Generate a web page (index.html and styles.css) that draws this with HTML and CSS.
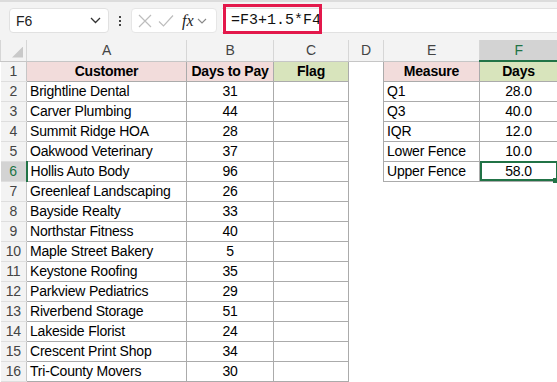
FILE: index.html
```html
<html lang="en">
  <head>
    <meta charset="utf-8"/>
    <title>Days to Pay</title>
    <link rel="stylesheet" href="styles.css">
  </head>
  <body>
    <div id="toolbar">
      <div class="namebox">
        <span class="cellref">F6</span>
        <svg class="chev" width="11" height="7" viewBox="0 0 11 7"><path d="M1 1 L5.5 5.5 L10 1" fill="none" stroke="#333" stroke-width="1.3"/></svg>
      </div>
      <div class="dots"><i></i><i></i><i></i></div>
      <div class="fxbox">
        <svg width="14" height="14" viewBox="0 0 14 14"><path d="M1 1 L13 13 M13 1 L1 13" stroke="#bdbdbd" stroke-width="1.2"/></svg>
        <svg width="16" height="14" viewBox="0 0 16 14"><path d="M1 7.5 L5.5 12 L15 1.5" fill="none" stroke="#bdbdbd" stroke-width="1.2"/></svg>
        <span class="fx">fx</span>
        <svg width="10" height="6" viewBox="0 0 10 6"><path d="M1 1 L5 5 L9 1" fill="none" stroke="#888" stroke-width="1.1"/></svg>
      </div>
      <div class="formula">=F3+1.5*F4</div>
      <div class="highlight"></div>
    </div>
    <table id="sheet">
      <colgroup>
        <col style="width:26px"><col style="width:160px"><col style="width:87px"><col style="width:75px"><col style="width:35px"><col style="width:96px"><col style="width:78px">
      </colgroup>
      <tr class="colhead">
        <th class="corner"><span class="tri"></span></th>
        <th>A</th><th>B</th><th>C</th><th>D</th><th>E</th><th class="active">F</th>
      </tr>
      <tr>
        <th class="rh">1</th>
        <td class="b hdr pink">Customer</td><td class="b hdr pink">Days to Pay</td><td class="b hdr green">Flag</td><td></td>
        <td class="b hdr pink">Measure</td><td class="b hdr green">Days</td>
      </tr>
      <tr><th class="rh">2</th><td class="b">Brightline Dental</td><td class="b num">31</td><td class="b"></td><td></td><td class="b">Q1</td><td class="b num">28.0</td></tr>
      <tr><th class="rh">3</th><td class="b">Carver Plumbing</td><td class="b num">44</td><td class="b"></td><td></td><td class="b">Q3</td><td class="b num">40.0</td></tr>
      <tr><th class="rh">4</th><td class="b">Summit Ridge HOA</td><td class="b num">28</td><td class="b"></td><td></td><td class="b">IQR</td><td class="b num">12.0</td></tr>
      <tr><th class="rh">5</th><td class="b">Oakwood Veterinary</td><td class="b num">37</td><td class="b"></td><td></td><td class="b">Lower Fence</td><td class="b num">10.0</td></tr>
      <tr><th class="rh active">6</th><td class="b">Hollis Auto Body</td><td class="b num">96</td><td class="b"></td><td></td><td class="b">Upper Fence</td><td class="b num sel">58.0<span class="handle"></span></td></tr>
      <tr><th class="rh">7</th><td class="b">Greenleaf Landscaping</td><td class="b num">26</td><td class="b"></td><td></td><td></td><td></td></tr>
      <tr><th class="rh">8</th><td class="b">Bayside Realty</td><td class="b num">33</td><td class="b"></td><td></td><td></td><td></td></tr>
      <tr><th class="rh">9</th><td class="b">Northstar Fitness</td><td class="b num">40</td><td class="b"></td><td></td><td></td><td></td></tr>
      <tr><th class="rh">10</th><td class="b">Maple Street Bakery</td><td class="b num">5</td><td class="b"></td><td></td><td></td><td></td></tr>
      <tr><th class="rh">11</th><td class="b">Keystone Roofing</td><td class="b num">35</td><td class="b"></td><td></td><td></td><td></td></tr>
      <tr><th class="rh">12</th><td class="b">Parkview Pediatrics</td><td class="b num">29</td><td class="b"></td><td></td><td></td><td></td></tr>
      <tr><th class="rh">13</th><td class="b">Riverbend Storage</td><td class="b num">51</td><td class="b"></td><td></td><td></td><td></td></tr>
      <tr><th class="rh">14</th><td class="b">Lakeside Florist</td><td class="b num">24</td><td class="b"></td><td></td><td></td><td></td></tr>
      <tr><th class="rh">15</th><td class="b">Crescent Print Shop</td><td class="b num">34</td><td class="b"></td><td></td><td></td><td></td></tr>
      <tr><th class="rh">16</th><td class="b">Tri-County Movers</td><td class="b num">30</td><td class="b"></td><td></td><td></td><td></td></tr>
      <tr><th class="rh"></th><td></td><td></td><td></td><td></td><td></td><td></td></tr>
    </table>
  </body>
</html>
```
FILE: styles.css
```css
* {
  box-sizing: border-box;
}
body {
  margin: 0;
  width: 557px;
  height: 382px;
  overflow: hidden;
  background: #fff;
  font-family: "Liberation Sans", Arial, sans-serif;
}
#toolbar {
  position: relative;
  height: 40px;
  background: #f3f3f3;
  border-top: 2px solid #dcdcdc;
  display: flex;
  align-items: flex-start;
  padding: 6px 0 0 9px;
}
.namebox {
  width: 100px;
  height: 25px;
  background: #fff;
  border: 1px solid #e1e1e1;
  border-radius: 4px;
  display: flex;
  align-items: center;
  justify-content: space-between;
  padding: 0 7px 0 6px;
}
.cellref {
  font-size: 14px;
  color: #222;
}
.dots {
  width: 22px;
  height: 25px;
  display: flex;
  flex-direction: column;
  align-items: center;
  justify-content: center;
  gap: 2px;
}
.dots i {
  width: 2px;
  height: 2px;
  background: #444;
}
.fxbox {
  width: 86px;
  height: 25px;
  background: #fff;
  border: 1px solid #e6e6e6;
  border-radius: 4px;
  display: flex;
  align-items: center;
  gap: 6px;
  padding-left: 6px;
}
.fx {
  font-family: "Liberation Serif", serif;
  font-style: italic;
  font-size: 16px;
  color: #222;
  margin-left: 2px;
  margin-right: -3px;
}
.formula {
  flex: 1;
  height: 25px;
  margin-left: 5px;
  background: #fff;
  border-top: 1px solid #e1e1e1;
  border-bottom: 1px solid #e1e1e1;
  font-family: "Liberation Mono", monospace;
  font-size: 15px;
  line-height: 23px;
  padding-left: 9px;
  color: #111;
}
.highlight {
  position: absolute;
  left: 223px;
  top: 2px;
  width: 99px;
  height: 30px;
  border: 3px solid #e3184b;
}
#sheet {
  border-collapse: collapse;
  table-layout: fixed;
  width: 557px;
  font-size: 14px;
  letter-spacing: -0.2px;
}
#sheet tr {
  height: 20px;
}
#sheet tr.colhead {
  height: 21px;
}
#sheet th, #sheet td {
  padding: 0 3px;
  height: 20px;
  white-space: nowrap;
  overflow: hidden;
}
#sheet .colhead th {
  height: 21px;
  background: #f3f3f3;
  font-weight: normal;
  color: #444;
  border-left: 1px solid #d6d6d6;
  border-bottom: 1px solid #c6c6c6;
  text-align: center;
}
#sheet .colhead th.active {
  background: #d3d3d3;
  color: #217346;
  border-bottom: 2px solid #217346;
}
.corner {
  position: relative;
}
.tri {
  position: absolute;
  right: 3px;
  bottom: 3px;
  width: 11px;
  height: 11px;
  background: #c9c9c9;
  clip-path: polygon(100% 0, 100% 100%, 0 100%);
}
.rh {
  background: #f3f3f3;
  font-weight: normal;
  color: #444;
  text-align: center;
  border-bottom: 1px solid #dedede;
  border-right: 1px solid #c6c6c6;
  padding: 0 !important;
}
.rh.active {
  background: #d3d3d3;
  color: #217346;
  border-right: 2px solid #217346;
}
.b {
  border: 1px solid #ababab;
  color: #000;
}
.hdr {
  font-weight: bold;
  text-align: center;
}
.pink {
  background: #f2dcdb;
}
.green {
  background: #d8e4bc;
}
.num {
  text-align: center;
}
.sel {
  position: relative;
  overflow: visible !important;
  outline: 2px solid #217346;
  outline-offset: -2px;
}
.handle {
  position: absolute;
  right: -1px;
  bottom: -2px;
  width: 5px;
  height: 5px;
  background: #217346;
}
```
